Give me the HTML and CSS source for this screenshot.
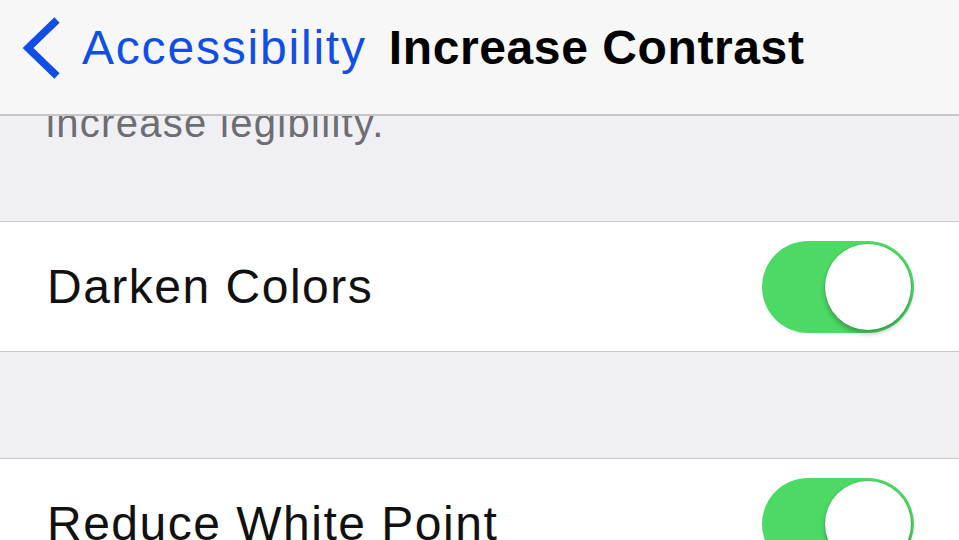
FILE: index.html
```html
<!DOCTYPE html>
<html lang="en">
<head>
  <meta charset="UTF-8">
  <meta name="viewport" content="width=device-width, initial-scale=1.0">
  <title>Increase Contrast</title>
  <link rel="stylesheet" href="styles.css">
</head>
<body>
  <header class="nav-bar">
    <a class="back" href="#">
      <svg class="chevron" viewBox="0 0 40 62" width="40" height="62">
        <polyline points="35,3 6,31 35,59" fill="none" stroke="#0f4fe6" stroke-width="7.5" />
      </svg>
      <span class="back-label">Accessibility</span>
    </a>
    <h1 class="title">Increase Contrast</h1>
  </header>

  <main class="settings">
    <!-- footer of the group above, scrolled under the bar -->
    <p class="group-footer">increase legibility.</p>

    <ul class="group">
      <li class="cell">
        <span class="cell-label">Darken Colors</span>
        <span class="switch on"><span class="knob"></span></span>
      </li>
    </ul>

    <ul class="group group-second">
      <li class="cell">
        <span class="cell-label">Reduce White Point</span>
        <span class="switch on"><span class="knob"></span></span>
      </li>
    </ul>
  </main>
</body>
</html>
```

FILE: styles.css
```css
body {
  margin: 0;
  background-color: #efeff4;
  font-family: "Liberation Sans", Arial, sans-serif;
  color: #111;
  overflow: hidden;
  height: 540px;
}

.nav-bar {
  position: relative;
  z-index: 1;
  display: flex;
  align-items: flex-start;
  height: 90px;
  padding-top: 24px;
  background-color: #f7f7f7;
  border-bottom: 2px solid #c6c6c8;
}

.back {
  display: flex;
  align-items: center;
  height: 48px;
  margin-left: 22px;
  text-decoration: none;
  color: #0f4fe6;
}

.chevron {
  display: block;
  margin-right: 20px;
}

.back-label {
  font-size: 48px;
  line-height: 48px;
  letter-spacing: 1.8px;
}

.title {
  margin: 0 0 0 22px;
  font-size: 48px;
  line-height: 48px;
  font-weight: bold;
  letter-spacing: 0.6px;
  color: #000;
}

.settings {
  display: flex;
  flex-direction: column;
}

.group-footer {
  margin: -13px 0 0 0;
  padding-left: 46px;
  font-size: 40px;
  line-height: 40px;
  letter-spacing: 1.3px;
  color: #6d6d72;
}

.group {
  list-style: none;
  margin: 78px 0 0 0;
  padding: 0;
  background-color: #fff;
  border-top: 1px solid #c8c7cc;
  border-bottom: 1px solid #c8c7cc;
}

.group-second {
  margin-top: 106px;
}

.cell {
  display: flex;
  align-items: center;
  justify-content: space-between;
  height: 129px;
  padding: 0 45px 0 47px;
}

.cell-label {
  font-size: 48px;
  line-height: 48px;
  letter-spacing: 1.5px;
  color: #111;
}

.switch {
  display: flex;
  align-items: center;
  justify-content: flex-end;
  width: 152px;
  height: 92px;
  padding: 0 3px;
  box-sizing: border-box;
  border-radius: 46px;
  background-color: #4cd964;
}

.knob {
  width: 86px;
  height: 86px;
  border-radius: 50%;
  background-color: #fff;
  box-shadow: 0 4px 5px rgba(0, 0, 0, 0.25), 0 0 0 1px rgba(0, 0, 0, 0.06);
}
```
